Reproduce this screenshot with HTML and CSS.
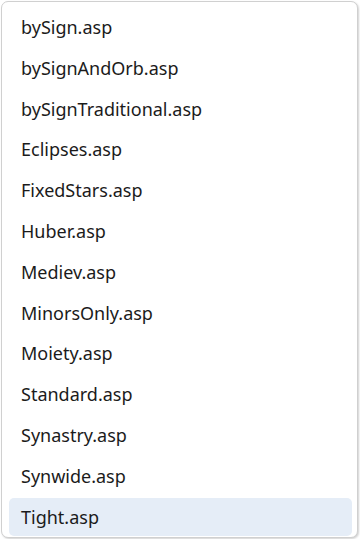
FILE: index.html
```html
<!DOCTYPE html>
<html>
<head>
<meta charset="utf-8">
<link rel="stylesheet" href="styles.css">
</head>
<body>
<div class="menu">
  <div class="item">bySign.asp</div>
  <div class="item">bySignAndOrb.asp</div>
  <div class="item">bySignTraditional.asp</div>
  <div class="item">Eclipses.asp</div>
  <div class="item">FixedStars.asp</div>
  <div class="item">Huber.asp</div>
  <div class="item">Mediev.asp</div>
  <div class="item">MinorsOnly.asp</div>
  <div class="item">Moiety.asp</div>
  <div class="item">Standard.asp</div>
  <div class="item">Synastry.asp</div>
  <div class="item">Synwide.asp</div>
  <div class="item selected">Tight.asp</div>
</div>
</body>
</html>
```
FILE: styles.css
```css
html, body {
  margin: 0;
  padding: 0;
  background: #ffffff;
}
body {
  width: 360px;
  height: 539px;
  overflow: hidden;
}
.menu {
  box-sizing: border-box;
  margin: 1px 0 0 1px;
  width: 357px;
  height: 537px;
  border: 1px solid #d0d0d0;
  border-radius: 7px;
  background: #ffffff;
  box-shadow: 1px 1px 2px rgba(0,0,0,0.18);
  padding: 6px 5px 0 7px;
  display: flex;
  flex-direction: column;
  gap: 2.8px;
  font-family: "Noto Sans", "Open Sans", sans-serif;
  font-size: 18px;
  color: #1b1b1b;
}
.item {
  height: 38px;
  line-height: 38px;
  padding-left: 12px;
  border-radius: 5px;
  flex-shrink: 0;
}
.selected {
  background: #e5edf7;
}
```
